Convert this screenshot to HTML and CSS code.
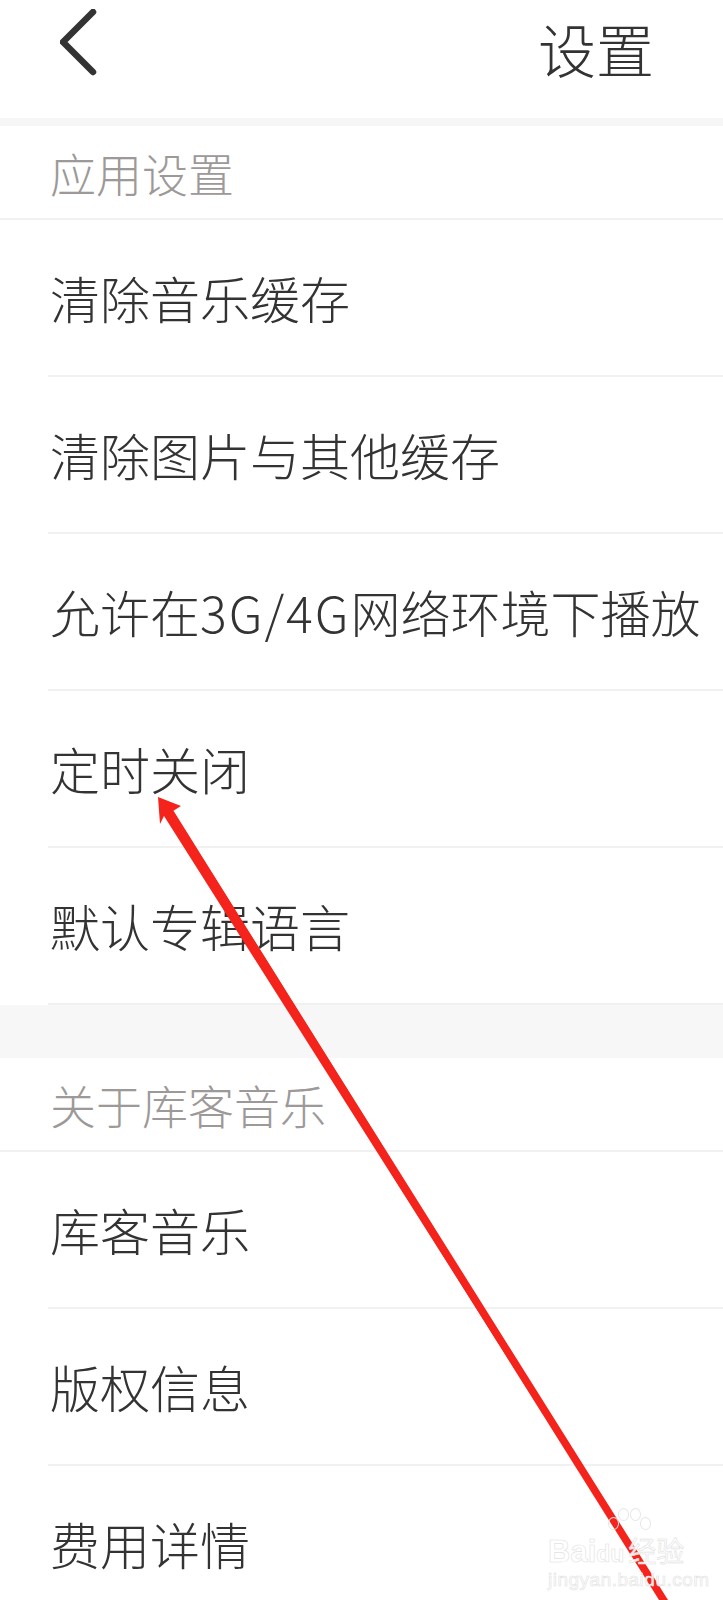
FILE: index.html
```html
<!DOCTYPE html>
<html lang="zh-CN">
<head>
    <meta charset="UTF-8">
    <meta name="viewport" content="width=device-width, initial-scale=1.0">
    <title>设置</title>
    <link rel="stylesheet" href="styles.css">
</head>
<body>
    <div class="page">
        <header class="topbar">
            <a class="back" href="#">
                <svg width="40" height="70" viewBox="0 0 40 70">
                    <polyline points="33,3 3,33 33,63" fill="none" stroke="#333" stroke-width="6.5" stroke-linecap="round" stroke-linejoin="round"/>
                </svg>
            </a>
            <h1 class="title">设置</h1>
        </header>

        <div class="gap thin"></div>

        <div class="section-title">应用设置</div>
        <ul class="list">
            <li class="item">清除音乐缓存</li>
            <li class="item">清除图片与其他缓存</li>
            <li class="item">允许在<span class="latin">3G/4G</span>网络环境下播放</li>
            <li class="item">定时关闭</li>
            <li class="item">默认专辑语言</li>
        </ul>

        <div class="gap"></div>

        <div class="section-title">关于库客音乐</div>
        <ul class="list">
            <li class="item">库客音乐</li>
            <li class="item">版权信息</li>
            <li class="item">费用详情</li>
        </ul>

        <!-- annotation arrow drawn over the screenshot -->
        <svg class="arrow" width="723" height="1600" viewBox="0 0 723 1600">
            <polygon points="158,797 181,806 173,811 668,1600 661,1600 164,816 160,824" fill="#f4231b"/>
            <polygon points="163,809 173,810 666,1600 659,1600" fill="#f4231b"/>
        </svg>

        <div class="watermark">
            <div class="wm-paw">
                <span></span><span></span><span></span><span></span>
            </div>
            <div class="wm-main">Bai<span class="wm-du">du</span><span class="wm-cn">经验</span></div>
            <div class="wm-url">jingyan.baidu.com</div>
        </div>
    </div>
</body>
</html>
```

FILE: styles.css
```css
body {
    margin: 0;
    background: #fff;
    font-family: "Noto Sans CJK SC", "Noto Sans", sans-serif;
    font-weight: 300;
    color: #333;
}
.page {
    position: relative;
    width: 723px;
    height: 1600px;
    overflow: hidden;
}
.topbar {
    height: 118px;
    display: flex;
    justify-content: space-between;
    align-items: flex-start;
    padding: 0 69px 0 60px;
    box-sizing: border-box;
}
.back {
    display: block;
    margin-top: 9px;
}
.back svg {
    display: block;
}
.title {
    margin: 8px 0 0;
    font-size: 58px;
    font-weight: 300;
    line-height: 80px;
    color: #333;
}
.gap {
    height: 53px;
    background: #f7f7f7;
}
.gap.thin {
    height: 8px;
    background: #f6f6f6;
}
.section-title {
    height: 92px;
    line-height: 92px;
    padding-left: 50px;
    font-size: 46px;
    color: #9d9999;
    border-bottom: 2px solid #f1f1f1;
}
.list {
    list-style: none;
    margin: 0;
    padding: 0 0 0 48px;
}
.item {
    height: 155px;
    line-height: 155px;
    padding-left: 2px;
    font-size: 50px;
    color: #333;
    white-space: nowrap;
    border-bottom: 2px solid #f1f1f1;
}
.latin {
    letter-spacing: 2px;
}
.arrow {
    position: absolute;
    left: 0;
    top: 0;
    pointer-events: none;
}
.watermark {
    position: absolute;
    left: 548px;
    top: 1506px;
    width: 150px;
    font-family: "Liberation Sans", Arial, sans-serif;
    color: rgba(255, 255, 255, 0.9);
}
.wm-paw {
    position: relative;
    height: 28px;
    margin-left: 60px;
}
.wm-paw span {
    position: absolute;
    width: 9px;
    height: 11px;
    border: 1px solid #e6e6e6;
    border-radius: 50%;
}
.wm-paw span:nth-child(1) { left: 0; top: 11px; }
.wm-paw span:nth-child(2) { left: 10px; top: 2px; }
.wm-paw span:nth-child(3) { left: 22px; top: 2px; }
.wm-paw span:nth-child(4) { left: 32px; top: 11px; }
.wm-main {
    font-size: 31px;
    font-weight: bold;
    line-height: 32px;
    white-space: nowrap;
}
.wm-main, .wm-url {
    -webkit-text-stroke: 0.6px #e2e2e2;
}
.wm-du {
    font-size: 23px;
    margin-right: 4px;
}
.wm-cn {
    font-family: "Noto Sans CJK SC", sans-serif;
    font-weight: 400;
    font-size: 28px;
}
.wm-url {
    font-size: 19px;
    line-height: 20px;
    letter-spacing: 0.5px;
    white-space: nowrap;
}
```
